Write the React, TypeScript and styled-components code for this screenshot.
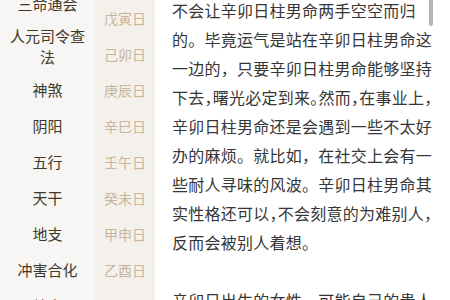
import React from "react";
import styled, { createGlobalStyle } from "styled-components";

interface Label {
  text: string;
  double?: boolean;
}

const labels: Label[] = [
  { text: "三命通会" },
  { text: "人元司令查法", double: true },
  { text: "神煞" },
  { text: "阴阳" },
  { text: "五行" },
  { text: "天干" },
  { text: "地支" },
  { text: "冲害合化" },
  { text: "纳音" },
];

const days = [
  "戊寅日",
  "己卯日",
  "庚辰日",
  "辛巳日",
  "壬午日",
  "癸未日",
  "甲申日",
  "乙酉日",
  "丙戌日",
];

const GlobalStyle = createGlobalStyle`
  html, body {
    margin: 0;
    padding: 0;
    background: #ffffff;
    overflow: hidden;
  }
  body {
    font-family: "Noto Sans CJK SC", "Noto Sans", sans-serif;
  }
`;

const App = () => {
  return (
    <Page>
      <GlobalStyle />
      <LeftNav>
        <NavList>
          {labels.map((l) => (
            <NavItem key={l.text} double={l.double}>
              {l.text}
            </NavItem>
          ))}
        </NavList>
      </LeftNav>
      <DayColumn>
        {days.map((d) => (
          <DayItem key={d}>{d}</DayItem>
        ))}
      </DayColumn>
      <Content>
        <Article>
          <Line>不会让辛卯日柱男命两手空空而归</Line>
          <Line>的。毕竟运气是站在辛卯日柱男命这</Line>
          <Line>一边的，只要辛卯日柱男命能够坚持</Line>
          <Line>
            下去<Half>，</Half>曙光必定到来<Half>。</Half>然而<Half>，</Half>在事业上<Half>，</Half>
          </Line>
          <Line>辛卯日柱男命还是会遇到一些不太好</Line>
          <Line>办的麻烦。就比如，在社交上会有一</Line>
          <Line>些耐人寻味的风波。辛卯日柱男命其</Line>
          <Line>
            实性格还可以<Half>，</Half>不会刻意的为难别人<Half>，</Half>
          </Line>
          <Line>反而会被别人着想。</Line>
          <Gap />
          <Line>辛卯日出生的女性，可能自己的贵人</Line>
        </Article>
        <ScrollThumb />
      </Content>
    </Page>
  );
};

const Page = styled.div`
  display: flex;
  width: 450px;
  height: 300px;
  overflow: hidden;
`;

const LeftNav = styled.div`
  width: 95px;
  flex-shrink: 0;
  background-color: #f7f6f4;
  overflow: hidden;
`;

const NavList = styled.div`
  display: flex;
  flex-direction: column;
  margin-top: -15px;
`;

const NavItem = styled.div<{ double?: boolean }>`
  display: flex;
  align-items: center;
  justify-content: center;
  box-sizing: border-box;
  height: ${(p) => (p.double ? "50px" : "36px")};
  padding: 0 8px;
  text-align: center;
  font-size: 15px;
  line-height: 21px;
  font-weight: 400;
  color: #3f3929;
`;

const DayColumn = styled.div`
  width: 60px;
  flex-shrink: 0;
  display: flex;
  flex-direction: column;
  background-color: #f4f1ec;
  overflow: hidden;
`;

const DayItem = styled.div`
  display: flex;
  align-items: center;
  justify-content: center;
  height: 36px;
  flex-shrink: 0;
  font-size: 14px;
  color: #c8b59c;
`;

const Content = styled.div`
  position: relative;
  flex: 1;
  background-color: #ffffff;
  padding-left: 17px;
  overflow: hidden;
`;

const Article = styled.div`
  margin-top: -4.5px;
  font-size: 16px;
  letter-spacing: 0.25px;
  line-height: 29px;
  color: #363636;
`;

const Line = styled.div`
  white-space: nowrap;
`;

const Half = styled.span`
  font-feature-settings: "halt";
`;

const Gap = styled.div`
  height: 29px;
`;

const ScrollThumb = styled.div`
  position: absolute;
  top: 0;
  right: 17px;
  width: 4px;
  height: 26px;
  border-radius: 0 0 2px 2px;
  background-color: #b4b4b4;
`;

export default App;
